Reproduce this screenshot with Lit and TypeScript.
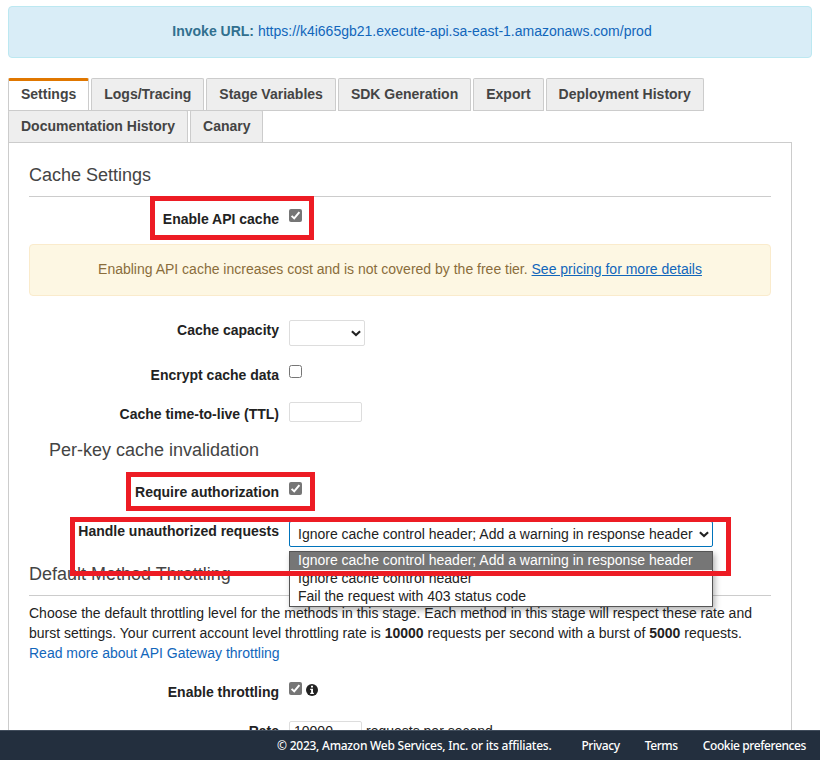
import { LitElement, html, css, svg, nothing } from "lit";
import { customElement, property } from "lit/decorators.js";
import { classMap } from "lit/directives/class-map.js";

const TABS = [
  "Settings",
  "Logs/Tracing",
  "Stage Variables",
  "SDK Generation",
  "Export",
  "Deployment History",
  "Documentation History",
  "Canary",
];

const OPTIONS = [
  "Ignore cache control header; Add a warning in response header",
  "Ignore cache control header",
  "Fail the request with 403 status code",
];

const chevron = svg`<path d="M0.9 1.2 L5 5.1 L9.1 1.2" fill="none" stroke="#222" stroke-width="2.1"/>`;

@customElement("check-box")
class CheckBox extends LitElement {
  @property({ type: Boolean }) checked = false;

  static styles = css`
    :host {
      display: block;
      width: 13px;
      height: 13px;
    }
    svg {
      display: block;
    }
  `;

  render() {
    return html`<svg width="13" height="13" viewBox="0 0 13 13">
      ${this.checked
        ? svg`<rect width="13" height="13" rx="2" fill="#767676"/>
            <path d="M2.6 6.9 L5.2 9.4 L10.4 3.1" fill="none" stroke="#fff" stroke-width="2"/>`
        : svg`<rect x="0.5" y="0.5" width="12" height="12" rx="2" fill="#fff" stroke="#767676"/>`}
    </svg>`;
  }
}

@customElement("select-box")
class SelectBox extends LitElement {
  @property() value = "";
  @property({ type: Boolean, reflect: true }) open = false;

  static styles = css`
    :host {
      position: relative;
      display: block;
      box-sizing: border-box;
      width: 76px;
      height: 26px;
    }
    :host([open]) {
      width: 424px;
    }
    .box {
      box-sizing: border-box;
      height: 26px;
      display: flex;
      align-items: center;
      justify-content: space-between;
      padding: 0 3px 0 8px;
      border: 1px solid #ddd;
      border-radius: 2px;
      background: #fff;
      line-height: 24px;
      white-space: nowrap;
    }
    .box.open {
      border-color: #0073bb;
    }
    .menu {
      position: absolute;
      top: 30px;
      left: 0;
      z-index: 2;
      box-sizing: border-box;
      width: 424px;
      border: 1px solid #555;
      background: #fff;
      box-shadow: 2px 3px 6px rgba(0, 0, 0, 0.3);
    }
    .option {
      box-sizing: border-box;
      height: 18px;
      padding-left: 8px;
      line-height: 16px;
      white-space: nowrap;
    }
    .option.active {
      background: #767676;
      color: #fff;
    }
  `;

  render() {
    return html`
      <div class=${classMap({ box: true, open: this.open })}>
        <span>${this.value}</span>
        <svg width="10" height="7" viewBox="0 0 10 7">${chevron}</svg>
      </div>
      ${this.open
        ? html`<div class="menu">
            ${OPTIONS.map(
              (o) =>
                html`<div class=${classMap({ option: true, active: o === this.value })}>${o}</div>`
            )}
          </div>`
        : nothing}
    `;
  }
}

@customElement("app-root")
class AppRoot extends LitElement {
  static styles = css`
    :host {
      display: block;
      position: relative;
      box-sizing: border-box;
      width: 820px;
      height: 760px;
      overflow: hidden;
      padding: 6px 8px 0;
      background: #fff;
      color: #222;
      font: 14px/20px "Liberation Sans", Arial, sans-serif;
    }
    a {
      color: #1166bb;
      text-decoration: none;
    }
    .invoke,
    .warning {
      box-sizing: border-box;
      height: 52px;
      padding-top: 14px;
      border: 1px solid #bce8f1;
      border-radius: 4px;
      background: #d9edf7;
      color: #31708f;
      text-align: center;
    }
    .invoke {
      padding-left: 4px;
    }
    .warning {
      border-color: #faebcc;
      background: #fdf7e3;
      color: #8a6d3b;
    }
    .warning a {
      text-decoration: underline;
    }
    .tabs {
      display: flex;
      flex-wrap: wrap;
      column-gap: 2px;
      width: 784px;
      margin-top: 20px;
    }
    .tab {
      box-sizing: border-box;
      height: 32px;
      padding: 5px 12px 0;
      border: 1px solid #ccc;
      border-bottom: 0;
      border-radius: 2px 2px 0 0;
      background: #eee;
      color: #444;
      font-weight: bold;
      box-shadow: 0 1px #ccc;
    }
    .tab.active {
      padding-top: 3px;
      border-top: 3px solid #e07700;
      background: #fff;
    }
    .panel {
      box-sizing: border-box;
      width: 784px;
      height: 640px;
      padding: 0 20px;
      border: 1px solid #ccc;
    }
    .title {
      box-sizing: border-box;
      height: 54px;
      padding-top: 22px;
      border-bottom: 1px solid #ccc;
      color: #444;
      font-size: 18px;
    }
    .title.second {
      height: 49px;
      padding-top: 17px;
    }
    .subtitle {
      padding: 8px 0 0 20px;
      height: 32px;
      color: #444;
      font-size: 18px;
    }
    .row {
      display: grid;
      grid-template-columns: 250px auto;
      column-gap: 10px;
      justify-content: start;
      align-items: start;
    }
    .label {
      font-weight: bold;
      text-align: right;
    }
    .label.low {
      padding-top: 2px;
    }
    .enable {
      padding-top: 12px;
      height: 35px;
    }
    .capacity {
      padding-top: 24px;
      height: 45px;
    }
    .encrypt {
      height: 37px;
    }
    .ttl {
      height: 30px;
    }
    .require {
      padding-top: 10px;
      height: 39px;
    }
    .handle {
      height: 26px;
    }
    .text {
      margin: 0;
      padding-top: 7px;
      height: 60px;
    }
    .throttle {
      padding-top: 19px;
      height: 39px;
    }
    .inline {
      display: flex;
      gap: 4px;
    }
    .info {
      margin-top: 2px;
    }
    .input {
      box-sizing: border-box;
      width: 73px;
      height: 20px;
      padding-left: 4px;
      border: 1px solid #ddd;
      border-radius: 2px;
      background: #fff;
      line-height: 18px;
    }
    .footer {
      position: absolute;
      left: 0;
      right: 0;
      bottom: 0;
      z-index: 3;
      display: flex;
      box-sizing: border-box;
      height: 30px;
      padding-right: 14px;
      gap: 25px;
      justify-content: flex-end;
      background: #232f3e;
      border-top: 1px solid #414d5c;
      color: #fff;
      font: 500 12px/30px "Noto Sans", "Open Sans", sans-serif;
      letter-spacing: -0.4px;
      white-space: nowrap;
    }
    .copyright {
      margin-right: 5px;
      letter-spacing: -0.25px;
    }
    .mark {
      position: absolute;
      z-index: 4;
      box-sizing: border-box;
      border: 5px solid #ed1c24;
    }
    .mark.cache {
      left: 150px;
      top: 196px;
      width: 164px;
      height: 44px;
    }
    .mark.auth {
      left: 126px;
      top: 472px;
      width: 189px;
      height: 39px;
    }
    .mark.requests {
      left: 70px;
      top: 517px;
      width: 661px;
      height: 59px;
    }
  `;

  render() {
    return html`
      <div class="invoke">
        <b>Invoke URL:</b> <a>https://k4i665gb21.execute-api.sa-east-1.amazonaws.com/prod</a>
      </div>
      <div class="tabs">
        ${TABS.map((t, i) => html`<div class=${classMap({ tab: true, active: i === 0 })}>${t}</div>`)}
      </div>
      <div class="panel">
        <div class="title">Cache Settings</div>
        <div class="row enable">
          <div class="label">Enable API cache</div>
          <check-box checked></check-box>
        </div>
        <div class="warning">
          Enabling API cache increases cost and is not covered by the free tier.
          <a>See pricing for more details</a>
        </div>
        <div class="row capacity">
          <div class="label">Cache capacity</div>
          <select-box></select-box>
        </div>
        <div class="row encrypt">
          <div class="label">Encrypt cache data</div>
          <check-box></check-box>
        </div>
        <div class="row ttl">
          <div class="label low">Cache time-to-live (TTL)</div>
          <div class="input"></div>
        </div>
        <div class="subtitle">Per-key cache invalidation</div>
        <div class="row require">
          <div class="label">Require authorization</div>
          <check-box checked></check-box>
        </div>
        <div class="row handle">
          <div class="label">Handle unauthorized requests</div>
          <select-box open .value=${OPTIONS[0]}></select-box>
        </div>
        <div class="title second">Default Method Throttling</div>
        <p class="text">
          Choose the default throttling level for the methods in this stage. Each method in this
          stage will respect these rate and burst settings. Your current account level throttling
          rate is <b>10000</b> requests per second with a burst of <b>5000</b> requests.
          <a>Read more about API Gateway throttling</a>
        </p>
        <div class="row throttle">
          <div class="label">Enable throttling</div>
          <div class="inline">
            <check-box checked></check-box>
            <svg class="info" width="12" height="12" viewBox="0 0 12 12">
              <circle cx="6" cy="6" r="6" fill="#222" />
              <path d="M5 1.8h2v1.7H5z M4.2 4.8H7v3.9h.9V10H4.2V8.7h.9V6h-.9z" fill="#fff" />
            </svg>
          </div>
        </div>
        <div class="row">
          <div class="label">Rate</div>
          <div class="inline">
            <div class="input">10000</div>
            <span>requests per second</span>
          </div>
        </div>
      </div>
      <div class="footer">
        <span class="copyright">© 2023, Amazon Web Services, Inc. or its affiliates.</span>
        <span>Privacy</span>
        <span>Terms</span>
        <span>Cookie preferences</span>
      </div>
      <div class="mark cache"></div>
      <div class="mark auth"></div>
      <div class="mark requests"></div>
    `;
  }
}
